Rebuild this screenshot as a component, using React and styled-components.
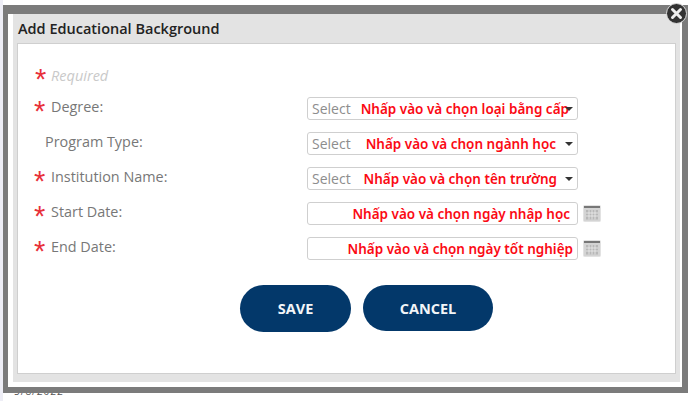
import React from "react";
import styled, { createGlobalStyle } from "styled-components";

const Global = createGlobalStyle`
  html, body { margin: 0; padding: 0; background: #fff; }
  body { font-family: "Open Sans", "Noto Sans", sans-serif; }
  #root { width: 688px; height: 401px; overflow: hidden; }
`;

const Page = styled.div`
  position: relative;
  width: 688px;
  height: 401px;
  box-sizing: border-box;
  padding: 5px 0 0 3px;
  background: linear-gradient(90deg, #eeeef6 3px, #fff 3px);
  overflow: hidden;
`;

const Frame = styled.div`
  position: relative;
  z-index: 1;
  width: 685px;
  height: 388px;
  box-sizing: border-box;
  border: solid #7b7b7b;
  border-width: 9px 6px 6px 5px;
  background: #fff;
  padding: 0 2px 5px 5px;
`;

const Panel = styled.div`
  height: 100%;
  box-sizing: border-box;
  background: #e3e3e3;
  padding: 0 4px 8px 4px;
  display: flex;
  flex-direction: column;
`;

const Title = styled.h1`
  margin: 0;
  height: 29px;
  flex: none;
  font-size: 14.5px;
  line-height: 30px;
  font-weight: 600;
  color: #222;
  padding-left: 1px;
  white-space: nowrap;
`;

const Body = styled.div`
  flex: 1;
  background: #fff;
  border: 1px solid #cfcfcf;
  padding: 21px 0 0 16px;
`;

const RequiredRow = styled.div`
  display: flex;
  align-items: flex-start;
  height: 32px;
  padding-left: 1px;
`;

const Star = styled.span`
  width: 17px;
  height: 20px;
  flex: none;
  font-family: "Liberation Sans", sans-serif;
  font-size: 29px;
  line-height: 28px;
  color: #e8303a;
`;

const RequiredText = styled.span`
  font-size: 14.5px;
  line-height: 21px;
  font-style: italic;
  color: #c9c9c9;
  margin-left: -1px;
`;

const Rows = styled.div`
  display: flex;
  flex-direction: column;
  gap: 12.5px;
`;

const Row = styled.div`
  display: flex;
  align-items: flex-start;
  height: 22.5px;
`;

const Label = styled.label`
  width: 273px;
  flex: none;
  display: flex;
  align-items: flex-start;
  padding-left: ${(p) => (p.$plain ? "11px" : "0")};
  box-sizing: border-box;
  font-size: 14.4px;
  line-height: 20px;
  color: #777;
  white-space: nowrap;
`;

const Control = styled.div`
  position: relative;
  width: 271px;
  height: 23px;
  flex: none;
  box-sizing: border-box;
  border: 1px solid #cfcfcf;
  border-radius: 3px;
  background: #fff;
  font-size: 14px;
  line-height: 22px;
  color: #8d8d8d;
  padding-left: 4px;
`;

const Arrow = styled.span`
  position: absolute;
  right: 4px;
  top: 9px;
  width: 0;
  height: 0;
  border-left: 4px solid transparent;
  border-right: 4px solid transparent;
  border-top: 4px solid #333;
`;

const Note = styled.span`
  position: absolute;
  right: ${(p) => p.$right}px;
  top: 0;
  font-family: "Noto Sans", "Open Sans", sans-serif;
  font-size: 13.5px;
  line-height: 22px;
  font-weight: 600;
  color: #fb0a14;
  white-space: nowrap;
`;

const Cal = styled.svg`
  width: 18px;
  height: 17px;
  margin: 3px 0 0 5px;
  flex: none;
`;

const Actions = styled.div`
  display: flex;
  align-items: center;
  gap: 12px;
  margin: 25px 0 0 206px;
`;

const Button = styled.button`
  width: ${(p) => p.$w}px;
  height: ${(p) => p.$h}px;
  border: 0;
  border-radius: 24px;
  background: #03386a;
  color: #f2f5f8;
  font-family: inherit;
  font-size: 14.5px;
  font-weight: 700;
  padding: 0;
`;

const Close = styled.div`
  position: absolute;
  z-index: 2;
  left: 666px;
  top: 3px;
  width: 21px;
  height: 21px;
  border-radius: 50%;
  background: #333;
  border: 1px solid #ddd;
  box-sizing: border-box;
  display: flex;
  align-items: center;
  justify-content: center;
`;

const Behind = styled.div`
  position: absolute;
  left: 14px;
  top: 386px;
  font-size: 10px;
  line-height: 10px;
  letter-spacing: 1px;
  color: #555;
`;

const Calendar = () => (
  <Cal viewBox="0 0 18 17">
    <rect x="0.5" y="0.5" width="17" height="16" rx="1" fill="#d4d4d4" stroke="#e2e2e2" />
    <rect x="1" y="1" width="16" height="2" fill="#777" />
    <rect x="3" y="5" width="12" height="9.5" fill="#b8b8b8" />
    <path d="M3 8h12M3 11h12M6 5v9.5M9 5v9.5M12 5v9.5" stroke="#eee" strokeWidth="0.8" fill="none" />
  </Cal>
);

const fields = [
  { label: "Degree:", req: true, select: true, note: "Nhấp vào và chọn loại bằng cấp", right: 8 },
  { label: "Program Type:", select: true, note: "Nhấp vào và chọn ngành học", right: 21 },
  { label: "Institution Name:", req: true, select: true, note: "Nhấp vào và chọn tên trường", right: 20 },
  { label: "Start Date:", req: true, note: "Nhấp vào và chọn ngày nhập học", right: 7 },
  { label: "End Date:", req: true, note: "Nhấp vào và chọn ngày tốt nghiệp", right: 4 },
];

export default function App() {
  return (
    <Page>
      <Global />
      <Behind>5/8/2022</Behind>
      <Frame>
        <Panel>
          <Title>Add Educational Background</Title>
          <Body>
            <RequiredRow>
              <Star>*</Star>
              <RequiredText>Required</RequiredText>
            </RequiredRow>
            <Rows>
              {fields.map((f) => (
                <Row key={f.label}>
                  <Label $plain={!f.req}>
                    {f.req && <Star>*</Star>}
                    {f.label}
                  </Label>
                  <Control>
                    {f.select && "Select"}
                    <Note $right={f.right}>{f.note}</Note>
                    {f.select && <Arrow />}
                  </Control>
                  {!f.select && <Calendar />}
                </Row>
              ))}
            </Rows>
            <Actions>
              <Button $w={111} $h={47}>SAVE</Button>
              <Button $w={130} $h={46}>CANCEL</Button>
            </Actions>
          </Body>
        </Panel>
      </Frame>
      <Close>
        <svg width="13" height="13" viewBox="0 0 13 13">
          <path d="M2.5 2.5l8 8M10.5 2.5l-8 8" stroke="#eee" strokeWidth="3" strokeLinecap="round" />
        </svg>
      </Close>
    </Page>
  );
}
